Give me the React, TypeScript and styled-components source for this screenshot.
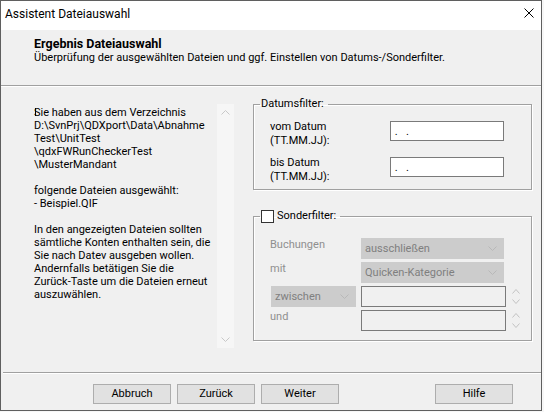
import React from "react";
import styled, { createGlobalStyle } from "styled-components";

const GlobalStyle = createGlobalStyle`
  html, body { margin: 0; padding: 0; background: #f7f7f7; }
  body { font-family: Roboto, "Liberation Sans", sans-serif; font-size: 11px; color: #000; }
  * { box-sizing: border-box; }
`;

const Window = styled.div`
  width: 542px;
  height: 411px;
  border: 1px solid #5f5f5f;
  background: #f0f0f0;
  display: flex;
  flex-direction: column;
`;

const TitleBar = styled.div`
  height: 29px;
  background: #fff;
  display: flex;
  align-items: flex-start;
  padding: 5px 7px 0 4px;
  font-size: 12px;
  line-height: 16px;
`;

const TitleText = styled.span`
  flex: 1;
`;

const CloseIcon = styled.svg`
  margin-top: 2px;
  width: 10px;
  height: 10px;
`;

const Header = styled.div`
  height: 55px;
  padding: 6px 0 0 33px;
`;

const HeaderTitle = styled.div`
  font-weight: 700;
  font-size: 12.5px;
  line-height: 15px;
`;

const HeaderSub = styled.div`
  line-height: 14px;
`;

const Separator = styled.div<{ $inset?: number }>`
  height: 2px;
  margin-left: ${(p) => p.$inset ?? 0}px;
  border-top: 1px solid #a0a0a0;
  border-bottom: 1px solid #fff;
`;

const Body = styled.div`
  height: 285px;
  display: flex;
  padding-left: 33px;
`;

const InfoPanel = styled.div`
  margin-top: 17px;
  height: 244px;
  display: flex;
`;

const InfoText = styled.div`
  position: relative;
  width: 183px;
  padding-top: 2px;
  white-space: pre;
  line-height: 13px;
`;

const Caret = styled.span`
  position: absolute;
  left: 1px;
  top: 4px;
  width: 1px;
  height: 8px;
  background: #000;
`;

const ScrollBar = styled.div`
  width: 17px;
  background: #f6f6f6;
  display: flex;
  flex-direction: column;
  justify-content: space-between;
`;

const ScrollButton = styled.div`
  height: 17px;
  display: flex;
  align-items: center;
  justify-content: center;
`;

const RightColumn = styled.div`
  margin-left: 19px;
  padding-top: 10px;
  width: 279px;
  display: flex;
  flex-direction: column;
  gap: 19px;
`;

const Group = styled.fieldset`
  margin: 0;
  padding: 0;
  min-width: 0;
  border: 1px solid #a0a0a0;
  box-shadow: inset 1px 1px 0 #fff, 1px 1px 0 #fff;
`;

const Legend = styled.legend`
  margin-left: 6px;
  padding: 0 4px 0 1px;
  line-height: 14px;
  display: flex;
  align-items: center;
  gap: 3px;
`;

const CheckBox = styled.span`
  display: inline-block;
  width: 13px;
  height: 13px;
  background: #fff;
  border: 1px solid #333;
`;

const DateGrid = styled.div`
  padding: 9px 0 5px 16px;
  display: grid;
  grid-template-columns: 120px 114px;
  grid-auto-rows: 28px;
  row-gap: 8px;
`;

const FieldLabel = styled.div<{ $disabled?: boolean }>`
  line-height: 14px;
  color: ${(p) => (p.$disabled ? "#8f8f8f" : "#000")};
`;

const DateInput = styled.input`
  margin: 1px 0 0;
  width: 114px;
  height: 20px;
  border: 1px solid #7a7a7a;
  background: #fff;
  font: inherit;
  letter-spacing: 1px;
  padding: 0;
  outline: none;
`;

const FilterGrid = styled.div`
  padding: 15px 0 9px 16px;
  display: grid;
  grid-template-columns: 91px 145px auto;
  grid-template-rows: 21px 21px 21px 21px;
  row-gap: 3px;
`;

const Combo = styled.div<{ $width: number; $offset?: number }>`
  width: ${(p) => p.$width}px;
  height: 21px;
  margin-left: ${(p) => p.$offset ?? 0}px;
  background: #cccccc;
  color: #7f7f7f;
  display: flex;
  align-items: center;
  justify-content: space-between;
  padding: 0 7px 0 4px;
  line-height: 14px;
`;

const DisabledBox = styled.div`
  width: 145px;
  height: 21px;
  border: 1px solid #7a7a7a;
  background: #f0f0f0;
`;

const Spinner = styled.div`
  margin-left: 6px;
  width: 9px;
  display: flex;
  flex-direction: column;
  justify-content: center;
  gap: 5px;
`;

const Footer = styled.div`
  height: 36px;
  display: flex;
  padding: 10px 28px 0 92px;
  gap: 6px;
`;

const Button = styled.button<{ $push?: boolean }>`
  width: 78px;
  height: 20px;
  margin-left: ${(p) => (p.$push ? "auto" : "0")};
  background: #e1e1e1;
  border: 1px solid #adadad;
  font: inherit;
  color: #000;
  padding: 0;
  line-height: 18px;
`;

const Chevron = ({ up, color = "#c2c2c2", w = 9 }: { up?: boolean; color?: string; w?: number }) => (
  <svg width={w} height="5" viewBox={`0 0 ${w} 5`}>
    <polyline
      points={up ? `0.5,4.5 ${w / 2},0.5 ${w - 0.5},4.5` : `0.5,0.5 ${w / 2},4.5 ${w - 0.5},0.5`}
      fill="none"
      stroke={color}
      strokeWidth="1"
    />
  </svg>
);

const info = `Sie haben aus dem Verzeichnis
D:\\SvnPrj\\QDXport\\Data\\Abnahme
Test\\UnitTest
\\qdxFWRunCheckerTest
\\MusterMandant

folgende Dateien ausgewählt:
- Beispiel.QIF

In den angezeigten Dateien sollten
sämtliche Konten enthalten sein, die
Sie nach Datev ausgeben wollen.
Andernfalls betätigen Sie die
Zurück-Taste um die Dateien erneut
auszuwählen.`;

export default function App() {
  return (
    <>
      <GlobalStyle />
      <Window>
        <TitleBar>
          <TitleText>Assistent Dateiauswahl</TitleText>
          <CloseIcon viewBox="0 0 10 10">
            <path d="M0.5 0.5 L9.5 9.5 M9.5 0.5 L0.5 9.5" stroke="#000" strokeWidth="1" />
          </CloseIcon>
        </TitleBar>
        <Header>
          <HeaderTitle>Ergebnis Dateiauswahl</HeaderTitle>
          <HeaderSub>Überprüfung der ausgewählten Dateien und ggf. Einstellen von Datums-/Sonderfilter.</HeaderSub>
        </Header>
        <Separator />
        <Body>
          <InfoPanel>
            <InfoText>
              <Caret />
              {info}
            </InfoText>
            <ScrollBar>
              <ScrollButton>
                <Chevron up color="#c8c8c8" />
              </ScrollButton>
              <ScrollButton>
                <Chevron color="#c8c8c8" />
              </ScrollButton>
            </ScrollBar>
          </InfoPanel>
          <RightColumn>
            <Group>
              <Legend>Datumsfilter:</Legend>
              <DateGrid>
                <FieldLabel>
                  vom Datum
                  <br />
                  (TT.MM.JJ):
                </FieldLabel>
                <DateInput readOnly value=" .  ." />
                <FieldLabel>
                  bis Datum
                  <br />
                  (TT.MM.JJ):
                </FieldLabel>
                <DateInput readOnly value=" .  ." />
              </DateGrid>
            </Group>
            <Group>
              <Legend>
                <CheckBox />
                Sonderfilter:
              </Legend>
              <FilterGrid>
                <FieldLabel $disabled>Buchungen</FieldLabel>
                <Combo $width={143}>
                  ausschließen
                  <Chevron color="#b8b8b8" />
                </Combo>
                <span />
                <FieldLabel $disabled>mit</FieldLabel>
                <Combo $width={143}>
                  Quicken-Kategorie
                  <Chevron color="#b8b8b8" />
                </Combo>
                <span />
                <Combo $width={85} $offset={1}>
                  zwischen
                  <Chevron color="#b8b8b8" />
                </Combo>
                <DisabledBox />
                <Spinner>
                  <Chevron up w={8} color="#c2c2c2" />
                  <Chevron w={8} color="#c2c2c2" />
                </Spinner>
                <FieldLabel $disabled>und</FieldLabel>
                <DisabledBox />
                <Spinner>
                  <Chevron up w={8} color="#c2c2c2" />
                  <Chevron w={8} color="#c2c2c2" />
                </Spinner>
              </FilterGrid>
            </Group>
          </RightColumn>
        </Body>
        <Separator $inset={2} />
        <Footer>
          <Button>Abbruch</Button>
          <Button>Zurück</Button>
          <Button>Weiter</Button>
          <Button $push>Hilfe</Button>
        </Footer>
      </Window>
    </>
  );
}
